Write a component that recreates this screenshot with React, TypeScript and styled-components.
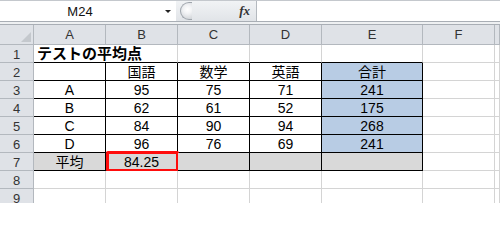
import React from "react";
import styled, { createGlobalStyle } from "styled-components";

const GlobalStyle = createGlobalStyle`
  html, body {
    margin: 0;
    background: #ffffff;
    font-family: "Liberation Sans", "Noto Sans CJK JP", sans-serif;
    overflow: hidden;
  }
`;

const Window = styled.div`
  width: 500px;
  height: 203px;
  overflow: hidden;
  background: #fff;
`;

const FormulaBar = styled.div`
  display: flex;
  height: 21px;
  border-top: 1px solid #c4c8cd;
  border-bottom: 1px solid #a9aeb5;
  box-sizing: border-box;
  height: 22px;
`;

const NameBox = styled.div`
  width: 176px;
  display: flex;
  align-items: center;
  background: #fff;
  font-size: 13px;
  color: #111;
`;

const NameText = styled.span`
  flex: 1;
  text-align: center;
`;

const DropArrow = styled.span`
  width: 16px;
  display: flex;
  justify-content: center;
  &::before {
    content: "";
    border-left: 3px solid transparent;
    border-right: 3px solid transparent;
    border-top: 3px solid #222;
  }
`;

const FxZone = styled.div`
  width: 80px;
  display: flex;
  align-items: center;
  justify-content: space-between;
  background: linear-gradient(#f1f3f5, #e1e4e8);
  padding: 0 6px 0 4px;
  box-sizing: border-box;
`;

const Knob = styled.div`
  width: 12px;
  height: 18px;
  border: 1px solid #9fa5ac;
  border-right: none;
  border-radius: 9px 0 0 9px;
  background: radial-gradient(circle at 60% 40%, #ffffff 0, #f2f3f5 35%, #c9cdd2 100%);
  box-sizing: border-box;
`;

const FxLabel = styled.span`
  font-family: "Liberation Serif", serif;
  font-style: italic;
  font-weight: bold;
  font-size: 13px;
  color: #333;
`;

const FormulaInput = styled.div`
  flex: 1;
  background: #fff;
  border-left: 1px solid #b4b9bf;
`;

const Strip = styled.div`
  height: 2px;
  background: #eef0f2;
`;

const Sheet = styled.div`
  display: grid;
  grid-template-columns: 34px 72px 72px 72px 72px 101px 72px 1fr;
  grid-template-rows: 20px;
  grid-auto-rows: 18px;
  border-top: 1px solid #a9aeb5;
`;

const HeaderCell = styled.div<{ $row?: boolean }>`
  background: #dfe2e7;
  border-right: 1px solid #b3b8be;
  border-bottom: 1px solid #b3b8be;
  box-sizing: border-box;
  display: flex;
  align-items: center;
  justify-content: center;
  font-size: 13px;
  color: #333;
  padding-top: ${(p) => (p.$row ? "1px" : "0")};
`;

const Corner = styled(HeaderCell)`
  position: relative;
  &::after {
    content: "";
    position: absolute;
    right: 2px;
    bottom: 2px;
    border-left: 10px solid transparent;
    border-bottom: 10px solid #c4c8cd;
  }
`;

const Cell = styled.div<{
  $fill?: string;
  $box?: boolean;
  $under?: boolean;
  $left?: boolean;
  $bold?: boolean;
  $span?: number;
}>`
  position: relative;
  box-sizing: border-box;
  grid-column: span ${(p) => p.$span ?? 1};
  background: ${(p) => p.$fill ?? "#fff"};
  border-right: 1px solid ${(p) => (p.$box ? "#000" : "#d4d4d4")};
  border-bottom: 1px solid ${(p) => (p.$box || p.$under ? "#000" : "#d4d4d4")};
  display: flex;
  align-items: flex-end;
  justify-content: ${(p) => (p.$left ? "flex-start" : "center")};
  padding-left: ${(p) => (p.$left ? "3px" : "0")};
  font-size: ${(p) => (p.$bold ? "15px" : "14px")};
  font-weight: ${(p) => (p.$bold ? "bold" : "normal")};
  line-height: 16px;
  color: #000;
  white-space: nowrap;
`;

const Highlight = styled.div`
  position: absolute;
  left: 0;
  top: -2px;
  width: 73px;
  height: 21px;
  border: 3px solid #ff0d0d;
  border-radius: 2px;
  box-sizing: border-box;
`;

const columns = ["A", "B", "C", "D", "E", "F", ""];

const BLUE = "#b8cce4";
const GRAY = "#d9d9d9";

type Row = string[];

const body: Row[] = [
  ["", "国語", "数学", "英語", "合計"],
  ["A", "95", "75", "71", "241"],
  ["B", "62", "61", "52", "175"],
  ["C", "84", "90", "94", "268"],
  ["D", "96", "76", "69", "241"],
  ["平均", "84.25", "", "", ""],
];

export default function App() {
  return (
    <Window>
      <GlobalStyle />
      <FormulaBar>
        <NameBox>
          <NameText>M24</NameText>
          <DropArrow />
        </NameBox>
        <FxZone>
          <Knob />
          <FxLabel>fx</FxLabel>
        </FxZone>
        <FormulaInput />
      </FormulaBar>
      <Strip />
      <Sheet>
        <Corner />
        {columns.map((c, i) => (
          <HeaderCell key={i}>{c}</HeaderCell>
        ))}

        <HeaderCell $row>1</HeaderCell>
        <Cell $span={2} $under $left $bold>
          テストの平均点
        </Cell>
        <Cell $under />
        <Cell $under />
        <Cell $under />
        <Cell />
        <Cell />

        {body.map((row, r) => {
          const isAvg = r === body.length - 1;
          return (
            <React.Fragment key={r}>
              <HeaderCell $row>{r + 2}</HeaderCell>
              {row.map((v, c) => (
                <Cell
                  key={c}
                  $box
                  $fill={isAvg ? GRAY : c === 4 ? BLUE : "#fff"}
                >
                  {v}
                  {isAvg && c === 1 && <Highlight />}
                </Cell>
              ))}
              <Cell />
              <Cell />
            </React.Fragment>
          );
        })}

        {[8, 9].map((n) => (
          <React.Fragment key={n}>
            <HeaderCell $row>{n}</HeaderCell>
            {columns.map((_, i) => (
              <Cell key={i} />
            ))}
          </React.Fragment>
        ))}
      </Sheet>
    </Window>
  );
}
